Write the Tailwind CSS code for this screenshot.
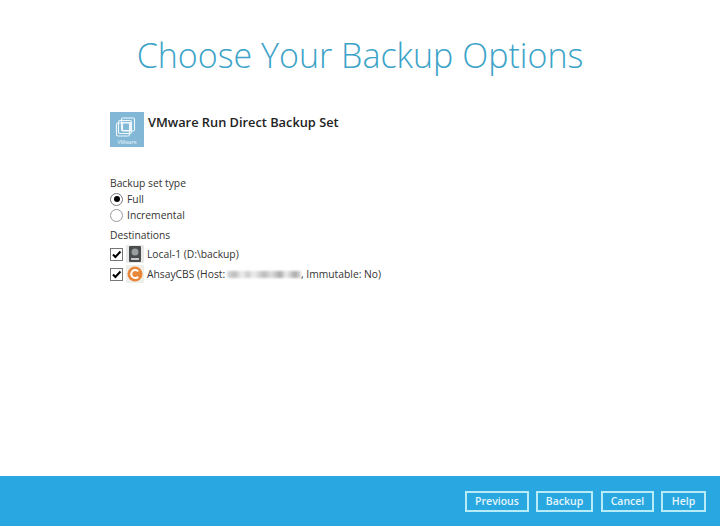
<!DOCTYPE html>
<html><head><meta charset="utf-8"><script src="https://cdn.jsdelivr.net/npm/@tailwindcss/browser@4"></script></head>
<body class="bg-white">
<div class="w-[720px] h-[526px] flex flex-col font-['Open_Sans',sans-serif] text-[#333] overflow-hidden">
<main class="flex-1 min-h-0 flex flex-col">
<h1 class="h-[112px] pt-[31px] text-center text-[34px] leading-[48px] font-light text-[#3ba3c8]">Choose Your Backup Options</h1>
<div class="pl-[110px] flex gap-[4px]">
<svg class="w-[34px] h-[35px]" viewBox="0 0 34 35"><rect width="34" height="35" fill="#82b8d6"/><g fill="none" stroke="#eef7fb" stroke-width="1.1"><rect x="11.5" y="6" width="13" height="13" rx="1.5"/><rect x="8.5" y="8.5" width="13" height="13" rx="1.5"/><rect x="6.5" y="11" width="13" height="13" rx="1.5"/><rect x="12.5" y="10.5" width="8" height="8"/></g><text x="17" y="32" text-anchor="middle" font-size="5" fill="#eef7fb" font-family="Open Sans">VMware</text></svg>
<div class="text-[12.8px] leading-[18px] font-semibold text-[#222] mt-[1px]">VMware Run Direct Backup Set</div>
</div>
<div class="pl-[110px] mt-[27px] text-[10.3px] leading-[16px]">
<div class="mt-[1px]">Backup set type</div>
<div class="flex items-center h-[16px] gap-[4px]"><span class="w-[13px] h-[13px] rounded-full border border-[#777] flex items-center justify-center"><span class="w-[6px] h-[6px] rounded-full bg-black"></span></span>Full</div>
<div class="flex items-center h-[16px] gap-[4px]"><span class="w-[13px] h-[13px] rounded-full border border-[#999]"></span>Incremental</div>
<div class="mt-[4px]">Destinations</div>
<div class="flex items-center h-[20px] mt-[1px]">
<span class="w-[13px] h-[13px] border border-[#777] flex items-center justify-center"><svg class="w-[11px] h-[11px]" viewBox="0 0 11 11"><path d="M2 5.5 4.4 8 9.5 2.5" fill="none" stroke="#000" stroke-width="2"/></svg></span>
<svg class="w-[18px] h-[18px] ml-[3px]" viewBox="0 0 18 18"><rect width="18" height="18" fill="#e8e8e6"/><rect x="3" y="1" width="12" height="16" rx="1" fill="#4a4d50"/><circle cx="9" cy="7" r="3.5" fill="#9a9c9e"/><rect x="5" y="13" width="8" height="2" fill="#c8c8c8"/></svg>
<span class="ml-[3px]">Local-1 (D:\backup)</span>
</div>
<div class="flex items-center h-[20px]">
<span class="w-[13px] h-[13px] border border-[#777] flex items-center justify-center"><svg class="w-[11px] h-[11px]" viewBox="0 0 11 11"><path d="M2 5.5 4.4 8 9.5 2.5" fill="none" stroke="#000" stroke-width="2"/></svg></span>
<svg class="w-[18px] h-[18px] ml-[3px]" viewBox="0 0 18 18"><rect width="18" height="18" fill="#efefea"/><circle cx="9" cy="9" r="7.5" fill="#e8863a"/><path d="M12.2 6.3A4 4 0 1 0 12.2 11.7" fill="none" stroke="#fff" stroke-width="2"/></svg>
<span class="ml-[3px] w-[80px] shrink-0">AhsayCBS (Host:</span>
<span class="w-[74px] shrink-0 h-[7px] blur-[1px] bg-[linear-gradient(90deg,#ddd_0%,#bbb_10%,#eee_20%,#ccc_28%,#eee_36%,#bbb_50%,#ddd_60%,#aaa_72%,#eee_80%,#aaa_92%,#ddd_100%)]"></span>
<span>, Immutable: No)</span>
</div>
</div>
</main>
<footer class="h-[50px] bg-[#29a7e0] flex items-center justify-end pr-[14px] text-[10.5px] font-semibold text-[#e4f6fc]">
<button class="h-[21px] w-[64px] pt-[1px] border-2 border-[#b5ecf7]">Previous</button>
<button class="h-[21px] w-[57px] pt-[1px] ml-[7px] border-2 border-[#b5ecf7]">Backup</button>
<button class="h-[21px] w-[53px] pt-[1px] ml-[8px] border-2 border-[#b5ecf7]">Cancel</button>
<button class="h-[21px] w-[45px] pt-[1px] ml-[7px] border-2 border-[#b5ecf7]">Help</button>
</footer>
</div>
</body></html>
